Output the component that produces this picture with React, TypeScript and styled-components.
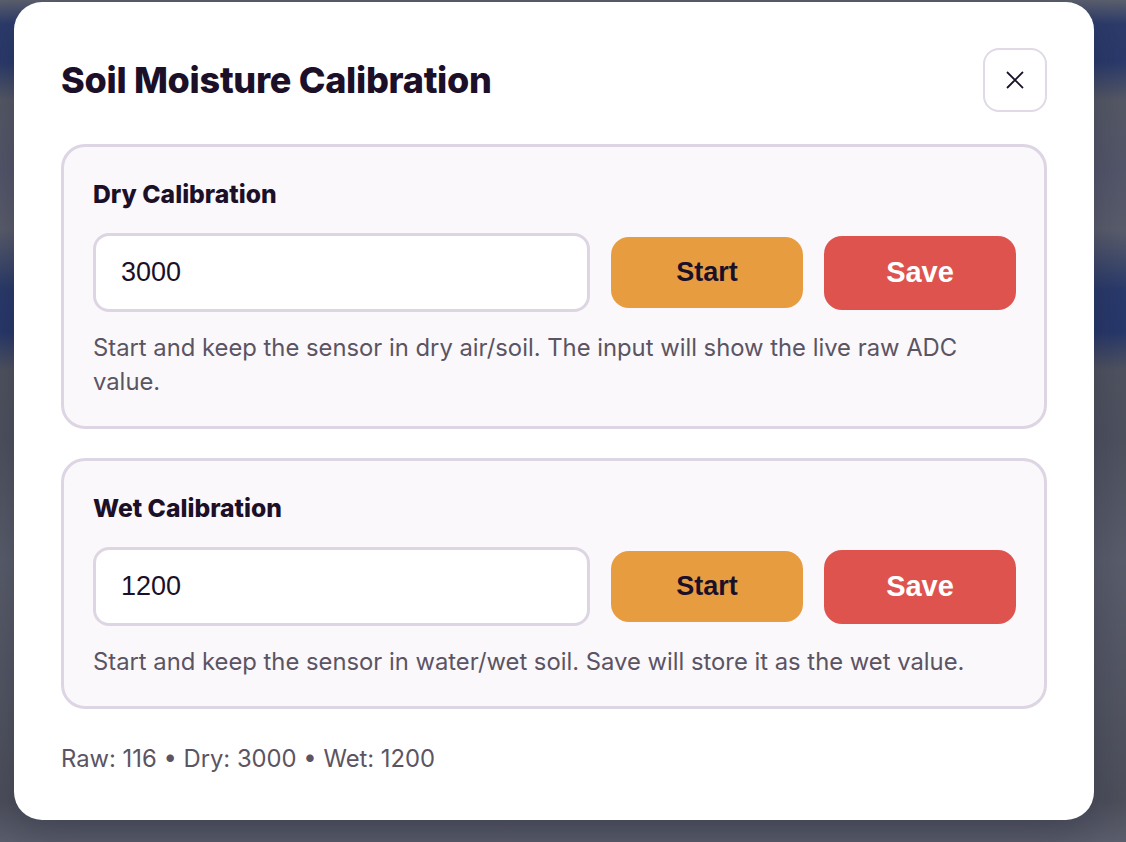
import React from 'react';
import styled, { createGlobalStyle } from 'styled-components';

const GlobalStyle = createGlobalStyle`
  html, body {
    margin: 0;
    padding: 0;
  }
  body {
    min-height: 100vh;
    font-family: Inter, 'Noto Sans', sans-serif;
    background: linear-gradient(
      180deg,
      #5b5f6d 0px,
      #2c3b6a 24px,
      #2b3a6b 62px,
      #555965 100px,
      #54566a 170px,
      #5a5d6b 230px,
      #2a3a6a 290px,
      #28386a 332px,
      #50535f 370px,
      #4e515e 440px,
      #5a5d6b 560px,
      #4d4f5b 800px,
      #5b5e6c 842px
    );
  }
`;

const Backdrop = styled.div`
  min-height: 100vh;
  box-sizing: border-box;
  padding: 2px 32px 0 14px;
`;

const Modal = styled.div`
  background: #ffffff;
  border-radius: 28px;
  padding: 46px 47px 44px 47px;
  box-shadow: 0 16px 40px rgba(10, 14, 40, 0.25);
`;

const Header = styled.div`
  display: flex;
  align-items: center;
  justify-content: space-between;
  margin-bottom: 32px;
`;

const Title = styled.h2`
  margin: 0;
  font-size: 36px;
  font-weight: 800;
  letter-spacing: -0.28px;
  color: #1c1029;
`;

const CloseButton = styled.button`
  width: 64px;
  height: 64px;
  box-sizing: border-box;
  border: 2px solid #e0d9e6;
  border-radius: 16px;
  background: #ffffff;
  display: flex;
  align-items: center;
  justify-content: center;
  padding: 0;
  color: #1c1029;
`;

const Cards = styled.div`
  display: flex;
  flex-direction: column;
  gap: 29px;
`;

const Card = styled.section`
  border: 3px solid #ddd5e3;
  border-radius: 24px;
  background: #faf8fb;
  padding: 32px 28px 27px 29px;
`;

const CardLabel = styled.h3`
  margin: 0 0 24px 0;
  font-size: 24.7px;
  line-height: 30px;
  font-weight: 800;
  color: #1c1029;
`;

const Row = styled.div`
  display: flex;
  align-items: center;
  gap: 21px;
`;

const ValueInput = styled.input`
  flex: 1;
  min-width: 0;
  height: 79px;
  box-sizing: border-box;
  border: 3px solid #ddd5e3;
  border-radius: 16px;
  background: #ffffff;
  padding: 0 25px;
  font-family: 'Liberation Sans', Arial, sans-serif;
  font-size: 27px;
  color: #1c1029;
  outline: none;
`;

const ActionButton = styled.button<{ $variant: 'start' | 'save' }>`
  width: 192px;
  height: ${(p) => (p.$variant === 'save' ? '74px' : '71px')};
  border: none;
  border-radius: 18px;
  font-family: 'Liberation Sans', Arial, sans-serif;
  font-weight: 700;
  font-size: ${(p) => (p.$variant === 'save' ? '29px' : '27px')};
  background: ${(p) => (p.$variant === 'save' ? '#df534f' : '#e89c40')};
  color: ${(p) => (p.$variant === 'save' ? '#ffffff' : '#1c1029')};
  cursor: pointer;
`;

const Hint = styled.p`
  margin: 19px 0 0 0;
  font-size: 23.8px;
  line-height: 34px;
  color: #5b5463;
`;

const Summary = styled.p`
  margin: 33px 0 0 0;
  font-size: 23.8px;
  line-height: 34px;
  color: #5b5463;
`;

const CloseIcon = () => (
  <svg width="22" height="22" viewBox="0 0 24 24" fill="none" stroke="currentColor" strokeWidth="2" strokeLinecap="square">
    <path d="M4 4L20 20M20 4L4 20" />
  </svg>
);

type CalibrationProps = {
  label: string;
  value: string;
  hint: string;
};

const CalibrationCard: React.FC<CalibrationProps> = ({ label, value, hint }) => (
  <Card>
    <CardLabel>{label}</CardLabel>
    <Row>
      <ValueInput defaultValue={value} />
      <ActionButton $variant="start">Start</ActionButton>
      <ActionButton $variant="save">Save</ActionButton>
    </Row>
    <Hint>{hint}</Hint>
  </Card>
);

const App: React.FC = () => {
  return (
    <>
      <GlobalStyle />
      <Backdrop>
        <Modal>
          <Header>
            <Title>Soil Moisture Calibration</Title>
            <CloseButton aria-label="Close">
              <CloseIcon />
            </CloseButton>
          </Header>
          <Cards>
            <CalibrationCard
              label="Dry Calibration"
              value="3000"
              hint="Start and keep the sensor in dry air/soil. The input will show the live raw ADC value."
            />
            <CalibrationCard
              label="Wet Calibration"
              value="1200"
              hint="Start and keep the sensor in water/wet soil. Save will store it as the wet value."
            />
          </Cards>
          <Summary>Raw: 116 • Dry: 3000 • Wet: 1200</Summary>
        </Modal>
      </Backdrop>
    </>
  );
};

export default App;
